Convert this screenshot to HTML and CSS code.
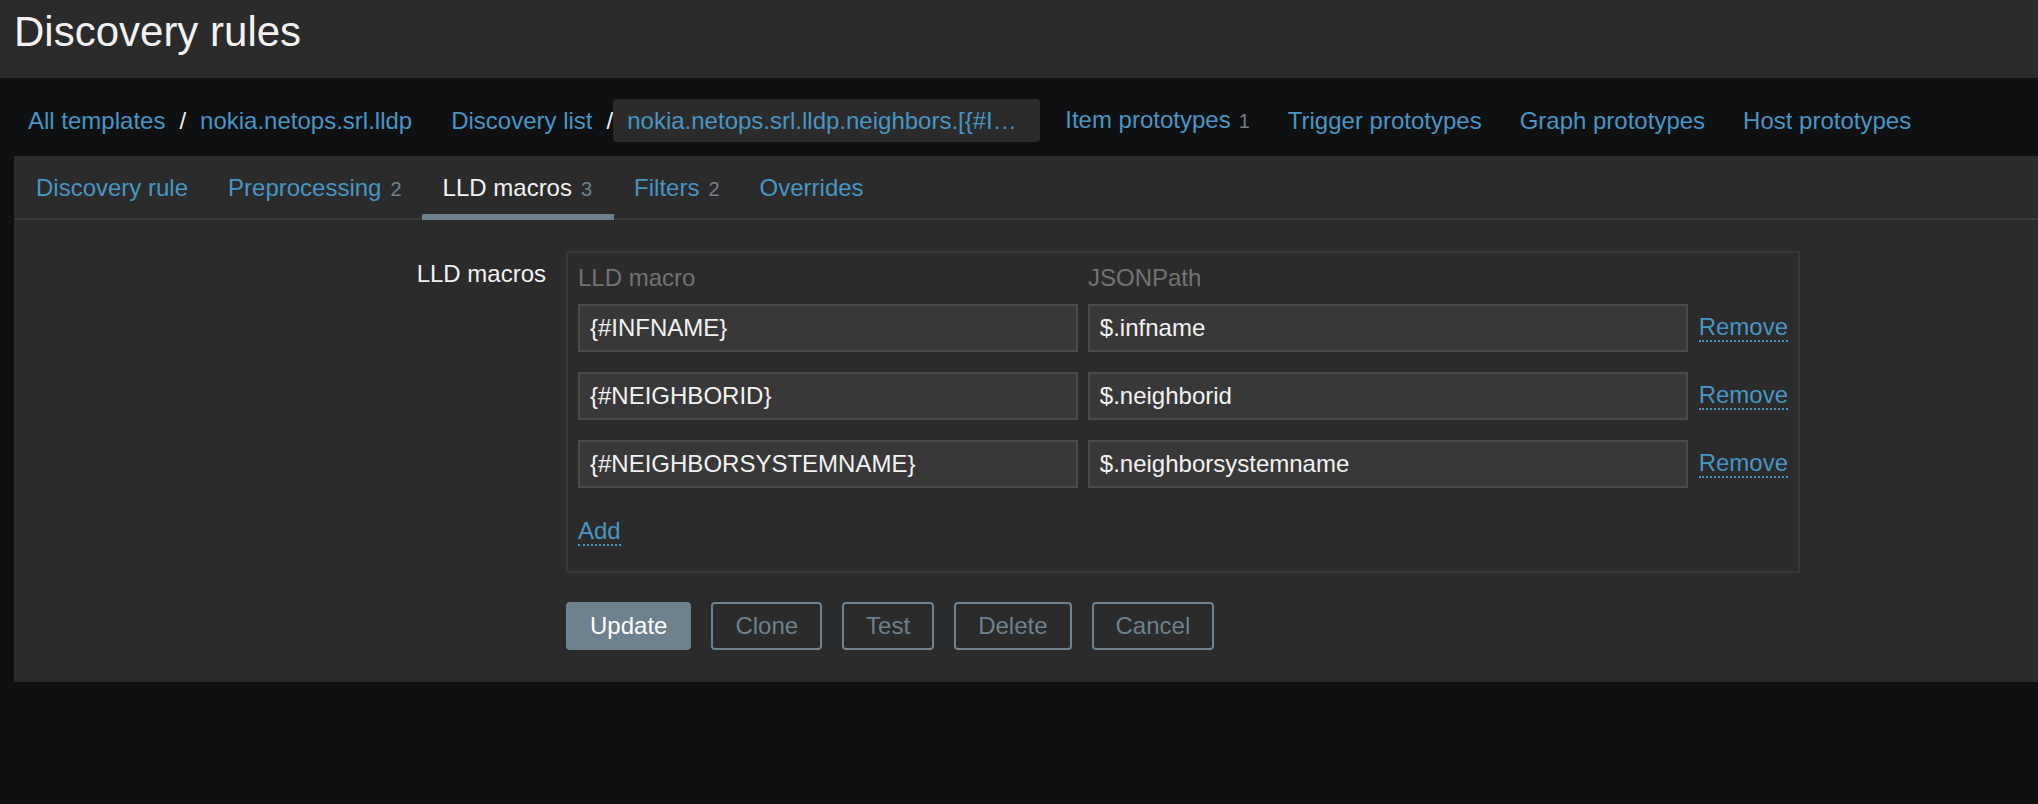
FILE: index.html
```html
<!DOCTYPE html>
<html lang="en">
<head>
<meta charset="utf-8">
<title>Discovery rules</title>
<link rel="stylesheet" href="styles.css">
</head>
<body>
<header class="page-header">
  <h1 class="page-title">Discovery rules</h1>
</header>
<nav class="crumbs">
  <div class="crumb-group group-first">
    <a class="link">All templates</a><span class="sep">/</span><a class="link">nokia.netops.srl.lldp</a>
  </div>
  <div class="crumb-group group-second">
    <a class="link">Discovery list</a><span class="sep sep-tight">/</span><a class="link crumb-selected">nokia.netops.srl.lldp.neighbors.[{#I…</a>
  </div>
  <a class="link nav-item">Item prototypes<span class="nav-count">1</span></a>
  <a class="link nav-item">Trigger prototypes</a>
  <a class="link nav-item">Graph prototypes</a>
  <a class="link nav-item">Host prototypes</a>
</nav>
<main class="panel">
  <ul class="tabs">
    <li class="tab"><a class="link">Discovery rule</a></li>
    <li class="tab"><a class="link">Preprocessing<span class="tab-count">2</span></a></li>
    <li class="tab tab-active"><span>LLD macros<span class="tab-count">3</span></span></li>
    <li class="tab"><a class="link">Filters<span class="tab-count">2</span></a></li>
    <li class="tab"><a class="link">Overrides</a></li>
  </ul>
  <form class="form">
    <label class="form-label">LLD macros</label>
    <div class="macro-box">
      <div class="macro-head">
        <span class="col-macro">LLD macro</span>
        <span class="col-path">JSONPath</span>
      </div>
      <div class="macro-row">
        <input class="field field-macro" type="text" value="{#INFNAME}">
        <input class="field field-path" type="text" value="$.infname">
        <a class="dotted-link remove">Remove</a>
      </div>
      <div class="macro-row">
        <input class="field field-macro" type="text" value="{#NEIGHBORID}">
        <input class="field field-path" type="text" value="$.neighborid">
        <a class="dotted-link remove">Remove</a>
      </div>
      <div class="macro-row">
        <input class="field field-macro" type="text" value="{#NEIGHBORSYSTEMNAME}">
        <input class="field field-path" type="text" value="$.neighborsystemname">
        <a class="dotted-link remove">Remove</a>
      </div>
      <div class="add-row">
        <a class="dotted-link">Add</a>
      </div>
    </div>
    <div class="buttons">
      <button type="button" class="btn btn-main">Update</button>
      <button type="button" class="btn">Clone</button>
      <button type="button" class="btn">Test</button>
      <button type="button" class="btn">Delete</button>
      <button type="button" class="btn">Cancel</button>
    </div>
  </form>
</main>
</body>
</html>
```
FILE: styles.css
```css
* {
  box-sizing: border-box;
}

html, body {
  margin: 0;
  padding: 0;
}

body {
  background: #0e1012;
  color: #f2f2f2;
  font-family: "Liberation Sans", Arial, Helvetica, sans-serif;
  font-size: 24px;
  width: 2038px;
  height: 804px;
  overflow: hidden;
}

.link {
  color: #4796c4;
  text-decoration: none;
  white-space: nowrap;
}

/* Header */
.page-header {
  height: 78px;
  background: #2b2b2b;
  padding: 11px 0 0 14px;
}

.page-title {
  margin: 0;
  font-size: 42px;
  line-height: 42px;
  font-weight: normal;
  color: #f2f2f2;
}

/* Breadcrumb navigation */
.crumbs {
  height: 78px;
  display: flex;
  align-items: center;
  padding: 7px 0 0 28px;
  line-height: 30px;
}

.crumb-group {
  display: flex;
  align-items: center;
}

.group-first {
  margin-right: 39px;
}

.group-second {
  margin-right: 25px;
}

.sep {
  color: #f2f2f2;
  margin: 0 14px;
}

.sep-tight {
  margin-right: 0;
}

.crumb-selected {
  display: block;
  width: 427px;
  height: 43px;
  line-height: 43px;
  padding-left: 14px;
  background: #2b2b2b;
  border-radius: 4px;
  overflow: hidden;
}

.nav-item {
  margin-right: 38px;
}

.nav-count {
  font-size: 20px;
  color: #7a7d80;
  margin-left: 8px;
}

/* Panel */
.panel {
  margin-left: 14px;
  background: #2b2b2b;
}

.tabs {
  list-style: none;
  margin: 0;
  padding: 0 0 0 2px;
  display: flex;
  height: 64px;
  border-bottom: 2px solid #383838;
}

.tab {
  height: 64px;
  margin-bottom: -2px;
  padding: 1px 20px 0 20px;
  line-height: 62px;
  white-space: nowrap;
}

.tab-active {
  color: #f2f2f2;
  padding-left: 21px;
  padding-right: 22px;
  box-shadow: inset 0 -6px 0 #6e818e;
}

.tab-count {
  font-size: 20px;
  color: #6e818e;
  margin-left: 9px;
}

/* Form */
.form {
  display: grid;
  grid-template-columns: 532px 1234px;
  column-gap: 20px;
  row-gap: 29px;
  padding: 31px 0 32px 0;
}

.form-label {
  text-align: right;
  margin-top: 8px;
  line-height: 30px;
  color: #f2f2f2;
}

.macro-box {
  border: 2px solid #383838;
  padding: 10px;
}

.macro-head {
  display: flex;
  height: 30px;
  line-height: 30px;
  margin-bottom: 11px;
  color: #737373;
}

.col-macro {
  width: 510px;
}

.macro-row {
  display: flex;
  align-items: center;
  gap: 10px;
  margin-bottom: 20px;
}

.field {
  height: 48px;
  margin: 0;
  padding: 0 10px;
  border: 2px solid #4a4a4a;
  background: #383838;
  color: #f2f2f2;
  font-family: "Liberation Sans", Arial, Helvetica, sans-serif;
  font-size: 24px;
  outline: none;
}

.field-macro {
  width: 500px;
}

.field-path {
  width: 600px;
}

.dotted-link {
  display: inline-block;
  color: #4796c4;
  line-height: 26px;
  border-bottom: 2px dotted #4796c4;
  white-space: nowrap;
}

.remove {
  margin-left: 1px;
}

.add-row {
  display: flex;
  padding: 10px 0 15px 0;
}

/* Buttons */
.buttons {
  grid-column: 2;
  display: flex;
  gap: 20px;
}

.btn {
  height: 48px;
  margin: 0;
  padding: 0 22px;
  border: 2px solid #6e818e;
  border-radius: 4px;
  background: transparent;
  color: #6e818e;
  font-family: "Liberation Sans", Arial, Helvetica, sans-serif;
  font-size: 24px;
  line-height: 44px;
}

.btn-main {
  background: #6e818e;
  color: #ffffff;
}
```
